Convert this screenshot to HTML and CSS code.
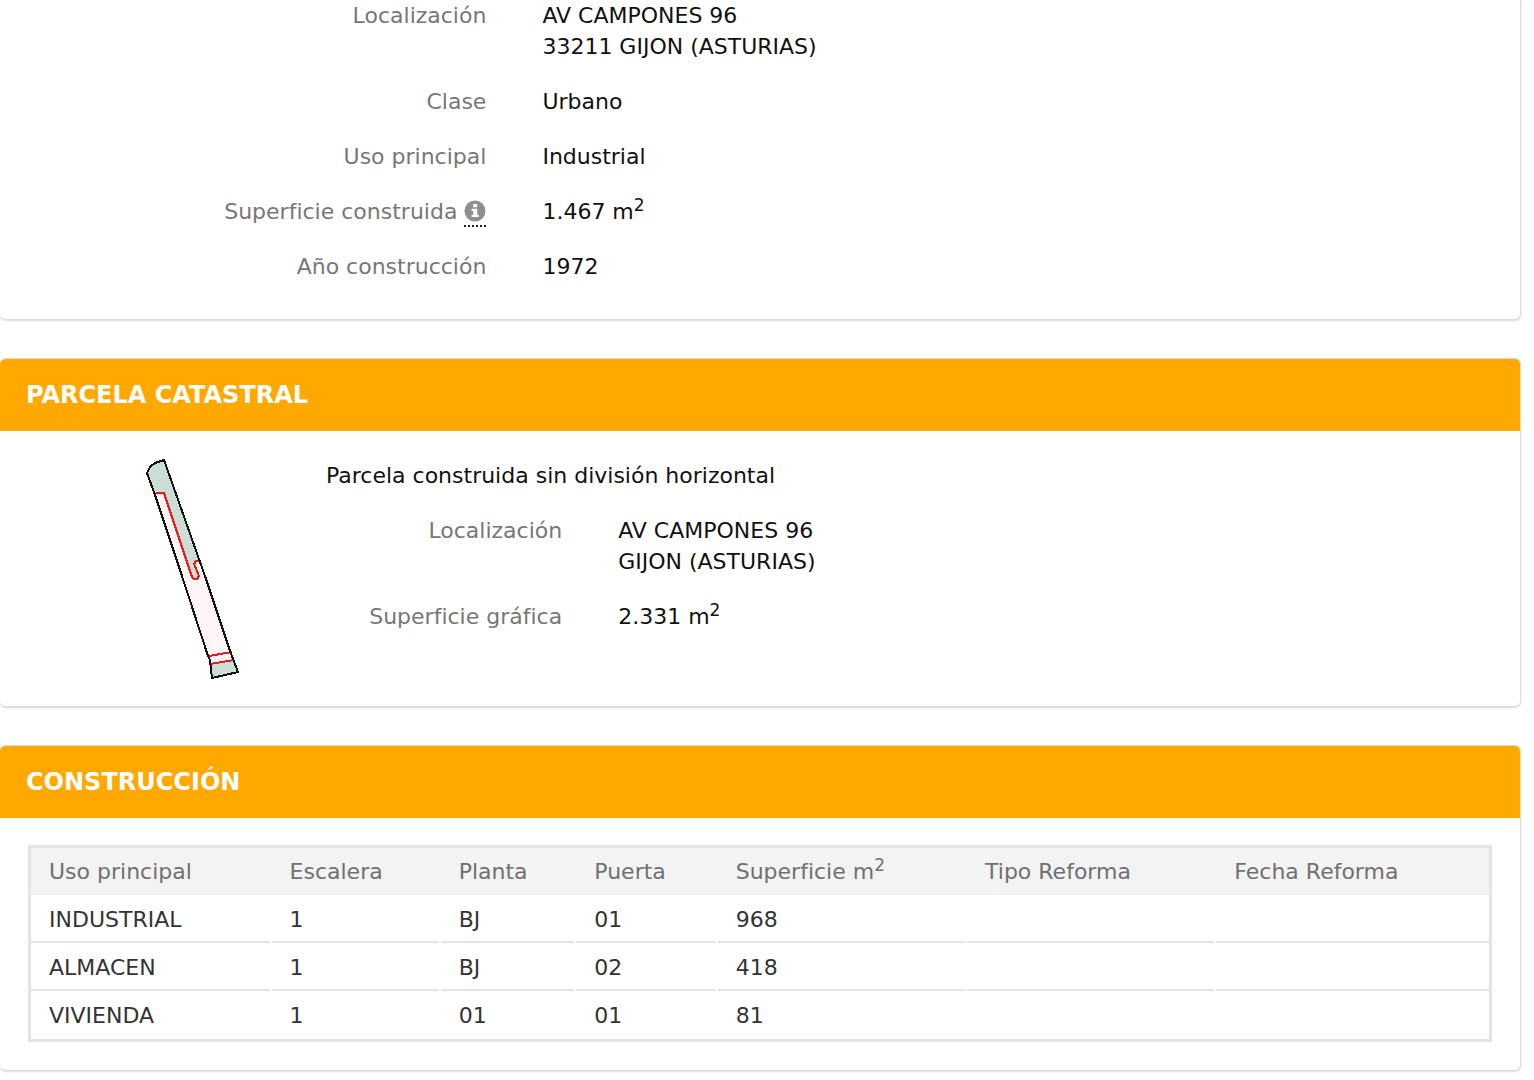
FILE: index.html
```html
<!DOCTYPE html>
<html lang="es">
<head>
<meta charset="utf-8">
<title>Datos catastrales</title>
<link rel="stylesheet" href="styles.css">
</head>
<body>
<main class="page">
  <section class="panel panel-first">
    <dl class="fields">
      <dt>Localización</dt><dd>AV CAMPONES 96<br>33211 GIJON (ASTURIAS)</dd>
      <dt>Clase</dt><dd>Urbano</dd>
      <dt>Uso principal</dt><dd>Industrial</dd>
      <dt>Superficie construida
        <span class="info"><svg viewBox="0 0 22 22" width="22" height="22" aria-hidden="true"><circle cx="11" cy="11" r="10.5" fill="#8f8f8f"/><path fill="#fff" d="M9.2 4h4v3.2h-4zM7.6 8.8h5.6v6h1.6V17H7.6v-2.2h1.7V11H7.6z"/></svg></span></dt>
      <dd>1.467 m<sup>2</sup></dd>
      <dt>Año construcción</dt><dd>1972</dd>
    </dl>
  </section>

  <section class="panel">
    <h2 class="panel-title">PARCELA CATASTRAL</h2>
    <div class="parcel">
      <svg class="parcel-map" viewBox="0 0 94 222" width="94" height="222" role="img" aria-label="Croquis de la parcela">
        <path fill="#fff5f7" d="M9 35 18 2 60 121 90 205 65 220 62 198z"/>
        <path fill="#cbded6" d="M1 15 4 9 9 5 18 2 54 103 48 104 53 118 52 121 47 121 18 35H9zM65 207 87 202 92 214 66 220z"/>
        <path class="built" d="M10 35H18L46 119 48 121H51L53 118 48 106 50 103H55M63 198 86 194M64 206 88 202"/>
        <path class="outline" d="M1 15 4 9 9 5 18 2 60 121 84 193 92 214 66 220 64 202 62 198 35 115 9 37z"/>
      </svg>
      <div class="parcel-data">
        <p class="parcel-type">Parcela construida sin división horizontal</p>
        <dl class="fields fields-parcel">
          <dt>Localización</dt><dd>AV CAMPONES 96<br>GIJON (ASTURIAS)</dd>
          <dt>Superficie gráfica</dt><dd>2.331 m<sup>2</sup></dd>
        </dl>
      </div>
    </div>
  </section>

  <section class="panel">
    <h2 class="panel-title">CONSTRUCCIÓN</h2>
    <div class="table-wrap">
      <table class="units">
        <colgroup><col class="c-use"><col class="c-stair"><col class="c-floor"><col class="c-door"><col class="c-area"><col class="c-type"><col></colgroup>
        <thead>
          <tr><th scope="col">Uso principal</th><th scope="col">Escalera</th><th scope="col">Planta</th><th scope="col">Puerta</th><th scope="col">Superficie m<sup>2</sup></th><th scope="col">Tipo Reforma</th><th scope="col">Fecha Reforma</th></tr>
        </thead>
        <tbody>
          <tr><td>INDUSTRIAL</td><td>1</td><td>BJ</td><td>01</td><td>968</td><td></td><td></td></tr>
          <tr><td>ALMACEN</td><td>1</td><td>BJ</td><td>02</td><td>418</td><td></td><td></td></tr>
          <tr><td>VIVIENDA</td><td>1</td><td>01</td><td>01</td><td>81</td><td></td><td></td></tr>
        </tbody>
      </table>
    </div>
  </section>
</main>
</body>
</html>
```
FILE: styles.css
```css
* { box-sizing: border-box; }

body {
  margin: 0;
  background: #fff;
  color: #111;
  font: 22px/31px Verdana, "DejaVu Sans", sans-serif;
}

.page {
  display: flex;
  flex-direction: column;
  gap: 38px;
  padding: 0 13px 8px 0;
}

.panel {
  border: 1px solid #dcdce0;
  border-left: 0;
  border-radius: 6px;
  box-shadow: 0 1px 2px rgba(0, 0, 0, 0.15);
  overflow: hidden;
}

.panel-first {
  border-top: 0;
  border-radius: 0 0 6px 6px;
  padding-bottom: 37px;
}

.panel-title {
  margin: 0;
  padding: 20px 26px;
  background: #ffa800;
  color: #fff;
  font-size: 24px;
  line-height: 32px;
}

.fields {
  display: grid;
  grid-template-columns: 32% 1fr;
  gap: 24px 56px;
  margin: 0;
}

.fields dt { color: #777; text-align: right; }
.fields dd { margin: 0; }

sup {
  font-size: 17px;
  line-height: 0;
}

.info {
  display: inline-block;
  height: 31px;
  vertical-align: top;
  border-bottom: 2px dotted #222;
}

.info svg { display: block; margin-top: 4px; }

.parcel {
  display: flex;
  gap: 86px;
  padding: 27px 13px 26px 146px;
}

.parcel-map { flex: none; }
.parcel-map path { shape-rendering: crispEdges; }
.outline { fill: none; stroke: #111; stroke-width: 2; }
.built { fill: none; stroke: #f01818; stroke-width: 2; }

.parcel-data { flex: 1; padding-top: 2px; }
.parcel-type { margin: 0 0 24px; }
.fields-parcel { grid-template-columns: 20% 1fr; }

.table-wrap { padding: 27px 28px 28px; }

.units {
  width: 100%;
  table-layout: fixed;
  border: 3px solid #e4e4e4;
  border-spacing: 0;
  color: #333;
}

.units th,
.units td {
  height: 48px;
  padding: 0 0 0 18px;
  text-align: left;
  font-weight: normal;
}

.units th {
  height: 47px;
  background: #f3f3f3;
  color: #707070;
}

/* row rules stop short of the next column */
.units tbody tr:not(:last-child) td {
  background: linear-gradient(#e2e4e4, #e2e4e4) left bottom / calc(100% - 2px) 2px no-repeat;
}

.units tbody tr:not(:last-child) td:last-child { background-size: 100% 2px; }

.c-use { width: 16.5%; }
.c-stair { width: 11.6%; }
.c-floor { width: 9.3%; }
.c-door { width: 9.7%; }
.c-area, .c-type { width: 17.1%; }
```
